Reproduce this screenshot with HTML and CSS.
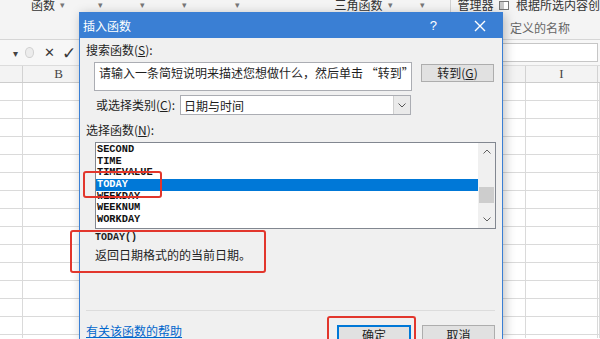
FILE: index.html
```html
<!DOCTYPE html>
<html lang="zh-CN">
<head>
  <meta charset="UTF-8" />
  <title>插入函数</title>
  <link rel="stylesheet" href="styles.css">
</head>
<body>
  <!-- Excel window behind the dialog -->
  <div class="excel">
    <div class="ribbon">
      <div class="ribbon-row">
        <span class="rb-text">函数</span><span class="caret c1">▾</span>
        <span class="caret c2">▾</span>
        <span class="caret c3">▾</span>
        <span class="caret c4">▾</span>
        <span class="caret c5">▾</span>
        <span class="rb-text trig">三角函数</span><span class="caret c6">▾</span>
        <span class="caret c7">▾</span>
        <span class="rb-sep"></span>
        <span class="rb-text mgr">管理器</span>
        <span class="rb-icon"></span>
        <span class="rb-text create">根据所选内容创</span>
      </div>
      <div class="ribbon-labels"><span class="group-label">定义的名称</span></div>
    </div>

    <div class="formula-bar">
      <span class="namebox-caret">▾</span>
      <span class="fx-circle"></span>
      <span class="fx-btn cancel">✕</span>
      <span class="fx-btn enter">✓</span>
      <div class="formula-input"></div>
    </div>

    <div class="col-headers">
      <div class="hcol w-a"></div>
      <div class="hcol w-b">B</div>
      <div class="hcol w-mid"></div>
      <div class="hcol w-i">I</div>
      <div class="hcol w-j"></div>
    </div>

    <div class="grid">
      <div class="gcol w-a"></div>
      <div class="gcol w-b"></div>
      <div class="gcol w-mid"></div>
      <div class="gcol w-i"></div>
      <div class="gcol w-j"></div>
    </div>
  </div>

  <!-- Insert function dialog -->
  <div class="dialog">
    <div class="dialog-title">
      <span class="title-text">插入函数</span>
      <span class="title-help">?</span>
      <svg class="title-close" width="12" height="12" viewBox="0 0 12 12">
        <path d="M1 1 L11 11 M11 1 L1 11" stroke="#fff" stroke-width="1.4" fill="none"/>
      </svg>
    </div>

    <div class="dialog-body">
      <div class="field-label">搜索函数(<u>S</u>):</div>
      <div class="search-row">
        <div class="search-box">请输入一条简短说明来描述您想做什么，然后单击 “转到”</div>
        <div class="btn btn-goto">转到(<u>G</u>)</div>
      </div>

      <div class="category-row">
        <span class="category-label">或选择类别(<u>C</u>):</span>
        <div class="select">
          <span class="select-value">日期与时间</span>
          <span class="select-arrow">
            <svg width="8" height="5" viewBox="0 0 8 5"><path d="M0.5 0.5 L4 4 L7.5 0.5" stroke="#555" fill="none"/></svg>
          </span>
        </div>
      </div>

      <div class="field-label fn-label">选择函数(<u>N</u>):</div>
      <div class="fn-list">
        <div class="fn-items">
          <div class="fn-item">SECOND</div>
          <div class="fn-item">TIME</div>
          <div class="fn-item">TIMEVALUE</div>
          <div class="fn-item selected">TODAY</div>
          <div class="fn-item">WEEKDAY</div>
          <div class="fn-item">WEEKNUM</div>
          <div class="fn-item">WORKDAY</div>
        </div>
        <div class="scrollbar">
          <span class="sb-arrow">
            <svg width="8" height="5" viewBox="0 0 8 5"><path d="M0.5 4.5 L4 1 L7.5 4.5" stroke="#606060" fill="none"/></svg>
          </span>
          <span class="sb-thumb"></span>
          <span class="sb-arrow down">
            <svg width="8" height="5" viewBox="0 0 8 5"><path d="M0.5 0.5 L4 4 L7.5 0.5" stroke="#606060" fill="none"/></svg>
          </span>
        </div>
      </div>

      <div class="desc-sig">TODAY()</div>
      <div class="desc-text">返回日期格式的的当前日期。</div>

      <div class="divider"></div>

      <div class="footer">
        <a href="#" class="help-link">有关该函数的帮助</a>
        <div class="footer-btns">
          <div class="btn btn-ok">确定</div>
          <div class="btn btn-cancel">取消</div>
        </div>
      </div>
    </div>
  </div>

  <!-- red annotation boxes -->
  <div class="mark mark-today"></div>
  <div class="mark mark-desc"></div>
  <div class="mark mark-ok"></div>
</body>
</html>
```

FILE: styles.css
```css
* {
  box-sizing: border-box;
}

html, body {
  margin: 0;
  padding: 0;
  overflow: hidden;
}

body {
  width: 600px;
  height: 339px;
  position: relative;
  background: #fff;
  font-family: "Noto Sans CJK SC", "Noto Sans", sans-serif;
  font-size: 12px;
  color: #1e1e1e;
}

/* ---------- excel background ---------- */

.ribbon {
  height: 40px;
  background: #f4f4f4;
  border-bottom: 1px solid #d6d6d6;
  display: flex;
  flex-direction: column;
}

.ribbon-row {
  display: flex;
  align-items: center;
  height: 12px;
  margin-top: -1px;
  line-height: 12px;
  white-space: nowrap;
  color: #333;
}

.rb-text {
  font-size: 12px;
}

.ribbon-row .rb-text:first-child { margin-left: 31px; }

.caret {
  display: inline-block;
  width: 8px;
  text-align: center;
  font-size: 9px;
  color: #777;
}

.c1 { margin-left: 4px; }
.c2 { margin-left: 30px; }
.c3 { margin-left: 35px; }
.c4 { margin-left: 34px; }
.c5 { margin-left: 46px; }
.trig { margin-left: 93px; }
.c6 { margin-left: 4px; }
.c7 { margin-left: 25px; }

.rb-sep {
  width: 1px;
  height: 14px;
  background: #d0d0d0;
  margin-left: 23px;
}

.mgr { margin-left: 7px; }

.rb-icon {
  width: 10px;
  height: 9px;
  margin-left: 6px;
  border: 1px solid #777;
  background: linear-gradient(to right, #c9c9c9 50%, #fff 50%);
}

.create { margin-left: 7px; }

.ribbon-labels {
  margin-top: auto;
  margin-bottom: 3px;
  padding-left: 510px;
  line-height: 16px;
}

.group-label {
  color: #666;
  font-size: 12px;
}

.formula-bar {
  height: 25px;
  display: flex;
  align-items: center;
  background: #f7f7f7;
}

.namebox-caret {
  margin-left: 11px;
  width: 8px;
  font-size: 10px;
  color: #444;
  text-align: center;
}

.fx-circle {
  margin-left: 6px;
  width: 9px;
  height: 11px;
  border-radius: 50%;
  border: 1px solid #cfcfcf;
  background: #ececec;
}

.fx-btn {
  font-family: "DejaVu Sans", sans-serif;
  font-weight: bold;
  color: #3a3a3a;
}

.fx-btn.cancel { margin-left: 10px; font-size: 13px; }
.fx-btn.enter { margin-left: 7px; font-size: 17px; }

.formula-input {
  flex: 1;
  height: 19px;
  margin-left: 6px;
  margin-right: 2px;
  background: #fff;
  border: 1px solid #c6c6c6;
}

.col-headers {
  height: 18px;
  display: flex;
  background: #f3f3f3;
  border-top: 1px solid #dcdcdc;
  border-bottom: 1px solid #cdcdcd;
}

.hcol {
  border-right: 1px solid #d2d2d2;
  text-align: center;
  font-family: "Liberation Serif", serif;
  font-size: 13px;
  line-height: 16px;
  color: #444;
}

.w-a { width: 23px; }
.w-b { width: 72px; }
.w-mid { width: 431px; }
.w-i { width: 72px; }
.w-j { flex: 1; border-right: none; }

.grid {
  display: flex;
  height: 255px;
}

.gcol {
  border-right: 1px solid #dadada;
  background-image: repeating-linear-gradient(
    to bottom,
    transparent 0,
    transparent 17px,
    #dadada 17px,
    #dadada 18px
  );
}

/* ---------- dialog ---------- */

.dialog {
  position: absolute;
  left: 79px;
  top: 12px;
  width: 424px;
  height: 327px;
  background: #f0f0f0;
  border: 1px solid #3a7fd4;
  border-bottom: none;
  box-shadow: 2px 2px 10px rgba(0, 0, 0, 0.25);
}

.dialog-title {
  height: 25px;
  background: #3a7fd4;
  color: #fff;
  display: flex;
  align-items: center;
  padding-left: 3px;
  padding-right: 16px;
}

.title-text {
  font-size: 12px;
}

.title-help {
  margin-left: auto;
  font-family: "Liberation Sans", sans-serif;
  font-size: 13px;
}

.title-close {
  margin-left: 37px;
}

.field-label {
  margin: 4px 0 0 6px;
  line-height: 16px;
}

.search-row {
  display: flex;
  margin-top: 4px;
  padding-left: 14px;
}

.search-box {
  width: 318px;
  height: 29px;
  background: #fff;
  border: 1px solid #abadb3;
  padding: 2px 0 0 4px;
  line-height: 16px;
  white-space: nowrap;
  overflow: hidden;
}

.btn {
  background: #e1e1e1;
  border: 1px solid #adadad;
  text-align: center;
  line-height: 18px;
}

.btn-goto {
  margin: 2px 0 0 9px;
  width: 73px;
  height: 18px;
  line-height: 16px;
}

.category-row {
  display: flex;
  align-items: center;
  margin-top: 4px;
  padding-left: 16px;
}

.category-label {
  width: 84px;
  line-height: 20px;
}

.select {
  width: 231px;
  height: 20px;
  display: flex;
  align-items: center;
  background: #fff;
  border: 1px solid #abadb3;
}

.select-value {
  padding-left: 3px;
  flex: 1;
}

.select-arrow {
  width: 17px;
  height: 18px;
  display: flex;
  align-items: center;
  justify-content: center;
  background: #eaeaea;
  border-left: 1px solid #cfcfcf;
}

.fn-label {
  margin-top: 7px;
}

.fn-list {
  margin: 4px 0 0 15px;
  width: 401px;
  height: 87px;
  display: flex;
  background: #fff;
  border: 1px solid #828790;
}

.fn-items {
  flex: 1;
  padding-top: 1px;
}

.fn-item {
  padding-left: 1px;
  height: 11.7px;
  line-height: 11.7px;
  font-family: "Liberation Mono", monospace;
  font-weight: bold;
  font-size: 10.3px;
  color: #111;
}

.fn-item.selected {
  background: #0078d7;
  color: #fff;
}

.scrollbar {
  width: 17px;
  display: flex;
  flex-direction: column;
  align-items: center;
  background: #f0f0f0;
}

.sb-arrow {
  height: 17px;
  display: flex;
  align-items: center;
  justify-content: center;
}

.sb-arrow.down {
  margin-top: auto;
}

.sb-thumb {
  width: 15px;
  height: 16px;
  margin-top: 27px;
  background: #cdcdcd;
}

.desc-sig {
  margin: 3px 0 0 15px;
  line-height: 12px;
  font-family: "Liberation Mono", monospace;
  font-weight: bold;
  font-size: 10px;
}

.desc-text {
  margin: 3px 0 0 15px;
  line-height: 16px;
  font-size: 12px;
}

.divider {
  margin: 47px 7px 0 6px;
  border-top: 1px solid #dcdcdc;
}

.footer {
  display: flex;
  padding: 0 7px 0 6px;
}

.help-link {
  margin-top: 12px;
  line-height: 16px;
  color: #0066cc;
  text-decoration: underline;
}

.footer-btns {
  margin-left: auto;
  margin-top: 14px;
  display: flex;
  gap: 11px;
}

.btn-ok,
.btn-cancel {
  height: 22px;
  width: 73px;
}

.btn-ok {
  width: 74px;
  border: 1px solid #0078d7;
  box-shadow: inset 0 0 0 1px #0078d7;
}

/* ---------- red annotations ---------- */

.mark {
  position: absolute;
  border: 2px solid #e2362c;
  border-radius: 3px;
}

.mark-today {
  left: 83px;
  top: 171px;
  width: 79px;
  height: 27px;
}

.mark-desc {
  left: 70px;
  top: 230px;
  width: 196px;
  height: 43px;
}

.mark-ok {
  left: 327px;
  top: 316px;
  width: 89px;
  height: 23px;
  border-bottom: none;
  border-radius: 3px 3px 0 0;
}
```
